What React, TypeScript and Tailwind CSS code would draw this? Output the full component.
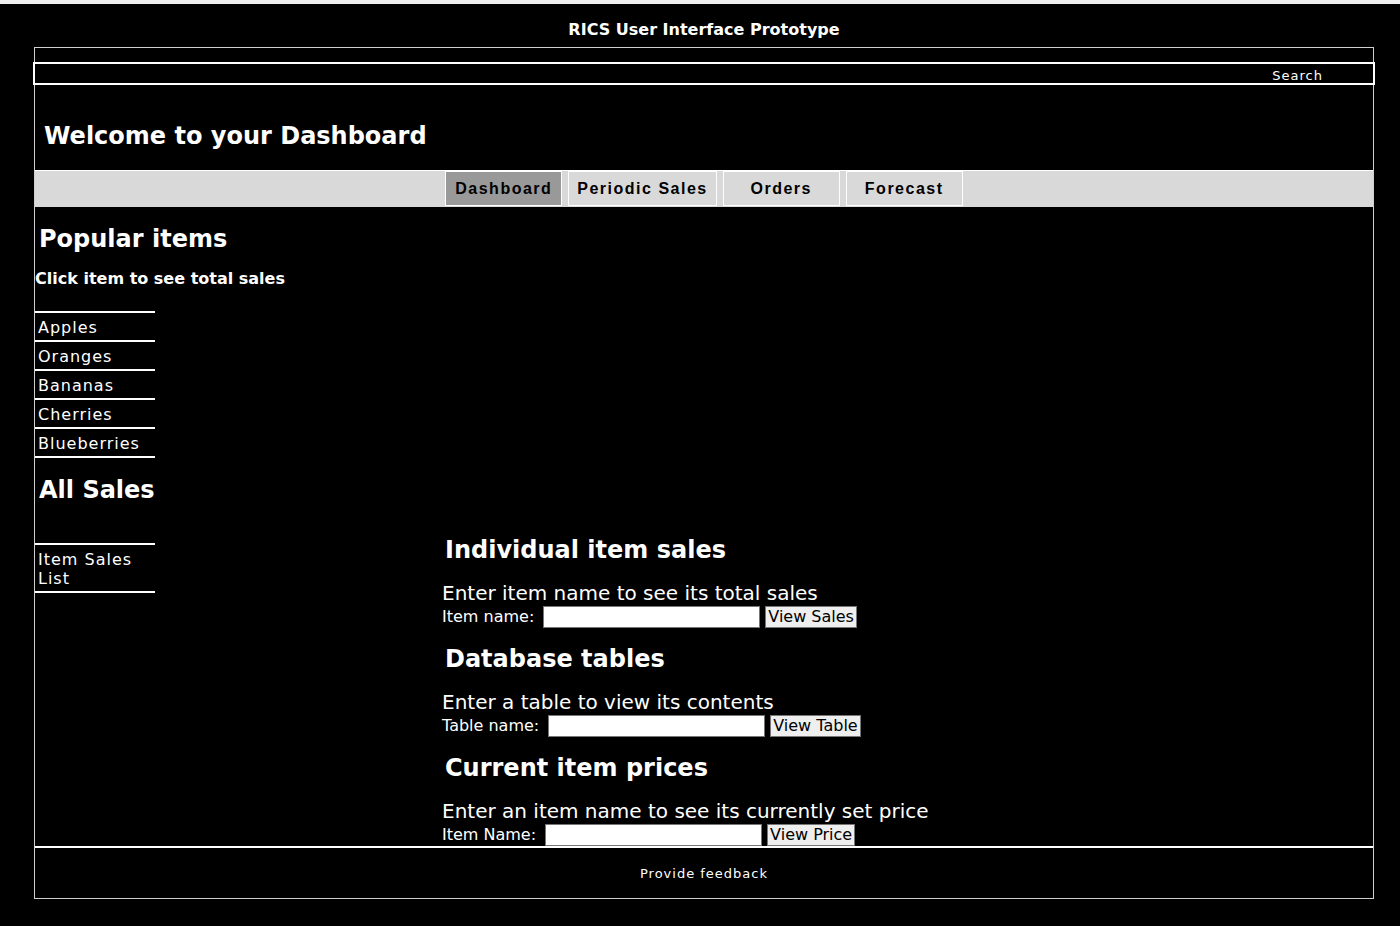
const popular = ['Apples', 'Oranges', 'Bananas', 'Cherries', 'Blueberries']

const tabs = [
  { label: 'Dashboard', active: true },
  { label: 'Periodic Sales', active: false },
  { label: 'Orders', active: false },
  { label: 'Forecast', active: false },
]

const sections = [
  {
    title: 'Individual item sales',
    hint: 'Enter item name to see its total sales',
    label: 'Item name:',
    button: 'View Sales',
  },
  {
    title: 'Database tables',
    hint: 'Enter a table to view its contents',
    label: 'Table name:',
    button: 'View Table',
  },
  {
    title: 'Current item prices',
    hint: 'Enter an item name to see its currently set price',
    label: 'Item Name:',
    button: 'View Price',
  },
]

const SideItem = ({ label, last }: { label: string; last?: boolean }) => (
  <li
    className={`border-t-2 border-white pl-[3px] pt-[2px] h-[29px] text-[16px] leading-[25px] tracking-[1px] ${
      last ? 'border-b-2 h-[31px]' : ''
    }`}
  >
    {label}
  </li>
)

export default function App() {
  return (
    <div className="min-h-[926px] bg-black text-white font-['DejaVu_Sans',sans-serif]">
      <div className="h-[4px] bg-[#f0f0f0]"></div>
      <div className="ml-[34px] w-[1340px] h-[43px] pt-[9px] flex items-center justify-center">
        <h1 className="text-[16px] font-bold leading-[20px]">RICS User Interface Prototype</h1>
      </div>

      <div className="ml-[34px] w-[1340px] border border-[#cfcfcf]">
        <div className="mt-[14px] -mx-[2px] h-[23px] border-2 border-white flex items-center justify-end pr-[50px]">
          <span className="text-[13px] tracking-[1px] leading-[15px] pt-[3px]">Search</span>
        </div>

        <div className="h-[85px] pt-[17px] flex items-center pl-[9px]">
          <h2 className="text-[24px] font-bold leading-[30px]">Welcome to your Dashboard</h2>
        </div>

        <nav className="h-[37px] border-t border-white bg-[#d9d9d9] flex justify-center gap-[6px]">
          {tabs.map((tab) => (
            <div
              key={tab.label}
              className={`h-[35px] min-w-[117px] px-[8px] border border-white flex items-center justify-center font-['Liberation_Sans',sans-serif] text-[16px] font-bold tracking-[1.5px] text-black ${
                tab.active ? 'bg-[#999999]' : 'bg-[#d9d9d9]'
              }`}
            >
              {tab.label}
            </div>
          ))}
        </nav>

        <div className="flex">
          <aside className="w-[120px] shrink-0">
            <h2 className="mt-[17px] pl-[4px] text-[24px] font-bold leading-[30px] whitespace-nowrap">Popular items</h2>
            <p className="mt-[15px] text-[16px] font-bold leading-[20px] whitespace-nowrap">Click item to see total sales</p>
            <ul className="mt-[22px]">
              {popular.map((item, i) => (
                <SideItem key={item} label={item} last={i === popular.length - 1} />
              ))}
            </ul>
            <h2 className="mt-[17px] pl-[4px] text-[24px] font-bold leading-[30px] whitespace-nowrap">All Sales</h2>
            <ul className="mt-[38px]">
              <li className="border-y-2 border-white pl-[3px] pt-[5px] pb-[3px] text-[16px] leading-[19px] tracking-[1px]">
                Item Sales List
              </li>
            </ul>
          </aside>

          <main className="flex-1 pl-[287px] pt-[329px]">
            {sections.map((s, i) => (
              <section key={s.title} className={i > 0 ? 'mt-[17px]' : ''}>
                <h3 className="pl-[3px] text-[24px] font-bold leading-[28px]">{s.title}</h3>
                <p className="mt-[17px] text-[20px] leading-[24px]">{s.hint}</p>
                <div className="mt-[1px] h-[22px] flex items-center">
                  <label className="text-[16px] leading-[20px]">{s.label}</label>
                  <input
                    type="text"
                    className="ml-[9px] w-[217px] h-[22px] bg-white border border-[#767676] text-black"
                  />
                  <button className="ml-[5px] h-[22px] px-[2px] bg-[#efefef] border border-[#767676] text-black text-[16px] leading-[18px]">
                    {s.button}
                  </button>
                </div>
              </section>
            ))}
          </main>
        </div>

        <footer className="h-[52px] border-t-2 border-white flex items-center justify-center">
          <span className="text-[13px] tracking-[1px] leading-[15px]">Provide feedback</span>
        </footer>
      </div>
    </div>
  )
}
